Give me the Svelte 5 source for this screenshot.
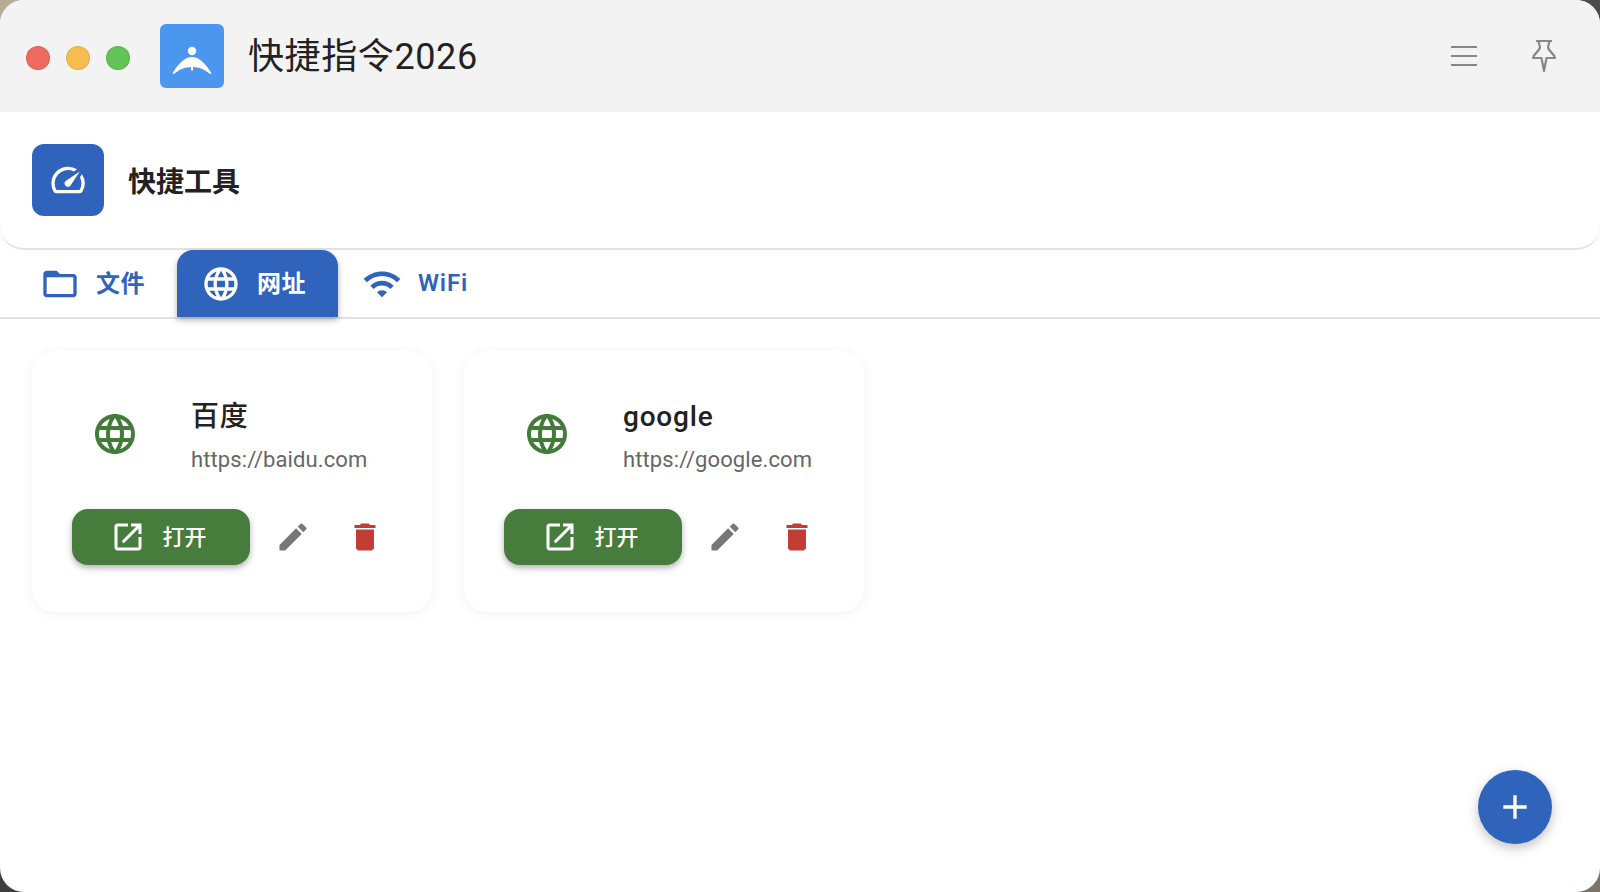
<script>
  const icons = {
    language:
      'M11.99 2C6.47 2 2 6.48 2 12s4.47 10 9.99 10C17.52 22 22 17.52 22 12S17.52 2 11.99 2zm6.93 6h-2.95c-.32-1.25-.78-2.45-1.38-3.56 1.84.63 3.37 1.91 4.33 3.56zM12 4.04c.83 1.2 1.48 2.53 1.91 3.96h-3.82c.43-1.43 1.08-2.76 1.91-3.96zM4.26 14C4.1 13.36 4 12.69 4 12s.1-1.36.26-2h3.38c-.08.66-.14 1.32-.14 2 0 .68.06 1.34.14 2H4.26zm.82 2h2.95c.32 1.25.78 2.45 1.38 3.56-1.84-.63-3.37-1.9-4.33-3.56zm2.95-8H5.08c.96-1.66 2.49-2.93 4.33-3.56C8.81 5.55 8.35 6.75 8.03 8zM12 19.96c-.83-1.2-1.48-2.53-1.91-3.96h3.82c-.43 1.43-1.08 2.76-1.91 3.96zM14.34 14H9.66c-.09-.66-.16-1.32-.16-2 0-.68.07-1.35.16-2h4.68c.09.65.16 1.32.16 2 0 .68-.07 1.34-.16 2zm.25 5.56c.6-1.11 1.06-2.31 1.38-3.56h2.95c-.96 1.65-2.49 2.93-4.33 3.56zM16.36 14c.08-.66.14-1.32.14-2 0-.68-.06-1.34-.14-2h3.38c.16.64.26 1.31.26 2s-.1 1.36-.26 2h-3.38z',
    folder:
      'M20 6h-8l-2-2H4c-1.1 0-1.99.9-1.99 2L2 18c0 1.1.9 2 2 2h16c1.1 0 2-.9 2-2V8c0-1.1-.9-2-2-2zm0 12H4V8h16v10z',
    wifi: 'M1 9l2 2c4.97-4.97 13.03-4.97 18 0l2-2C16.93 2.93 7.08 2.93 1 9zm8 8l3 3 3-3c-1.65-1.66-4.34-1.66-6 0zm-4-4l2 2c2.76-2.76 7.24-2.76 10 0l2-2C15.14 9.14 8.87 9.14 5 13z',
    open: 'M19 19H5V5h7V3H5c-1.11 0-2 .9-2 2v14c0 1.1.89 2 2 2h14c1.1 0 2-.9 2-2v-7h-2v7zM14 3v2h3.59l-9.83 9.83 1.41 1.41L19 6.41V10h2V3h-7z',
    edit: 'M3 17.25V21h3.75L17.81 9.94l-3.75-3.75L3 17.25zM20.71 7.04c.39-.39.39-1.02 0-1.41l-2.34-2.34c-.39-.39-1.02-.39-1.41 0l-1.83 1.83 3.75 3.75 1.83-1.83z',
    trash: 'M6 19c0 1.1.9 2 2 2h8c1.1 0 2-.9 2-2V7H6v12zM19 4h-3.5l-1-1h-5l-1 1H5v2h14V4z',
    add: 'M19 13h-6v6h-2v-6H5v-2h6V5h2v6h6v2z',
    speed:
      'M20.38 8.57l-1.23 1.85a8 8 0 0 1-.22 7.58H5.07A8 8 0 0 1 15.58 6.85l1.85-1.23A10 10 0 0 0 3.35 19a2 2 0 0 0 1.72 1h13.85a2 2 0 0 0 1.74-1 10 10 0 0 0-.27-10.44zM10.59 15.41a2 2 0 0 0 2.83 0l5.66-8.49-8.49 5.66a2 2 0 0 0 0 2.83z'
  };

  const tabs = [
    { label: '文件', icon: 'folder' },
    { label: '网址', icon: 'language' },
    { label: 'WiFi', icon: 'wifi' }
  ];

  let activeTab = $state('网址');

  const links = [
    { name: '百度', url: 'https://baidu.com' },
    { name: 'google', url: 'https://google.com' }
  ];
</script>

{#snippet icon(name, size)}
  <svg width={size} height={size} viewBox="0 0 24 24" fill="currentColor"><path d={icons[name]} /></svg>
{/snippet}

<div class="window">
  <header class="titlebar">
    <div class="lights">
      <span class="light red"></span>
      <span class="light yellow"></span>
      <span class="light green"></span>
    </div>
    <div class="logo">
      <svg width="64" height="64" viewBox="0 0 64 64" fill="#fff">
        <circle cx="32" cy="27" r="4.2" />
        <path d="M13 48.5 C19 39 25 33 32 33 C39 33 45 39 51 48.5 C52 50 50.5 50.5 49.5 49.5 C44 45 39 43.5 33 43 L33 46.5 L31 46.5 L31 43 C25 43.5 20 45 14.5 49.5 C13.5 50.5 12 50 13 48.5 Z" />
      </svg>
    </div>
    <h1>快捷指令2026</h1>
    <div class="window-actions">
      <svg width="36" height="36" viewBox="0 0 36 36" stroke="#888" stroke-width="2" fill="none">
        <path d="M5 9h26M5 18h26M5 27h26" />
      </svg>
      <svg width="36" height="36" viewBox="0 0 36 36" stroke="#888" stroke-width="2.2" fill="none" stroke-linejoin="round">
        <path d="M10 3h16M12.5 3.5 L14 9 C14 13 8 15 7 20 L15.5 20 L18 33 L20.5 20 L29 20 C28 15 22 13 22 9 L23.5 3.5" />
      </svg>
    </div>
  </header>

  <section class="section-head">
    <div class="section-icon">{@render icon('speed', 40)}</div>
    <h2>快捷工具</h2>
  </section>

  <nav class="tabs">
    {#each tabs as tab (tab.label)}
      <button class="tab" class:active={activeTab === tab.label} onclick={() => (activeTab = tab.label)}>
        {@render icon(tab.icon, 40)}
        <span>{tab.label}</span>
      </button>
    {/each}
  </nav>

  <main class="cards">
    {#each links as link (link.name)}
      <article class="card">
        <div class="card-top">
          <div class="globe">{@render icon('language', 48)}</div>
          <div class="card-text">
            <div class="name">{link.name}</div>
            <div class="url">{link.url}</div>
          </div>
        </div>
        <div class="card-actions">
          <button class="open">{@render icon('open', 36)}<span>打开</span></button>
          <button class="icon-btn edit">{@render icon('edit', 36)}</button>
          <button class="icon-btn del">{@render icon('trash', 36)}</button>
        </div>
      </article>
    {/each}
  </main>

  <button class="fab">{@render icon('add', 40)}</button>
</div>

<style>
  :global(body) {
    background: conic-gradient(#4c4c4c 25%, #7c7466 25% 50%, #3f3f3f 50% 75%, #b5ad98 75%);
  }

  .window {
    position: relative;
    height: 892px;
    display: flex;
    flex-direction: column;
    background: #fff;
    border-radius: 24px;
    overflow: hidden;
    font-family: Roboto, 'Noto Sans CJK SC', sans-serif;
    color: #222;
  }

  button {
    border: none;
    background: none;
    padding: 0;
    font: inherit;
    color: inherit;
    cursor: pointer;
  }

  svg {
    display: block;
    flex: none;
  }

  .titlebar {
    flex: none;
    height: 112px;
    display: flex;
    align-items: center;
    padding-left: 26px;
    background: #f3f3f3;
  }
  .lights {
    display: flex;
    gap: 16px;
    margin-top: 4px;
  }
  .light {
    width: 24px;
    height: 24px;
    border-radius: 50%;
    box-sizing: border-box;
    border: 1px solid rgba(0, 0, 0, 0.08);
  }
  .red { background: #ee6a5f; }
  .yellow { background: #f5bd4f; }
  .green { background: #61c454; }

  .logo {
    width: 64px;
    height: 64px;
    margin-left: 30px;
    border-radius: 6px;
    background: #4b96ee;
  }
  h1 {
    margin: 2px 0 0 24px;
    font-size: 36px;
    font-weight: 400;
    line-height: 44px;
    letter-spacing: 0.6px;
  }
  .window-actions {
    display: flex;
    gap: 44px;
    margin-left: auto;
    margin-right: 38px;
  }

  .section-head {
    flex: none;
    height: 135px;
    padding: 0 0 1px 32px;
    display: flex;
    align-items: center;
    gap: 24px;
    border-radius: 0 0 24px 24px;
    border-bottom: 2px solid #e2e2e2;
  }
  .section-icon {
    width: 72px;
    height: 72px;
    display: flex;
    align-items: center;
    justify-content: center;
    border-radius: 12px;
    background: #3064bc;
    color: #fff;
  }
  h2 {
    margin: 0;
    font-size: 28px;
    font-weight: 700;
  }

  .tabs {
    flex: none;
    display: flex;
    padding-left: 16px;
    border-bottom: 2px solid #e2e2e2;
  }
  .tab {
    height: 67px;
    display: flex;
    align-items: center;
    gap: 16px;
    padding: 0 32px 0 24px;
    font-size: 24px;
    font-weight: 600;
    letter-spacing: 0.5px;
    color: #3064bc;
    border-radius: 16px 16px 0 0;
  }
  .tab span {
    margin-bottom: 5px;
  }
  .tab:last-child span {
    margin-bottom: 1px;
    letter-spacing: 0.8px;
  }
  .tab.active {
    background: #3064bc;
    color: #fff;
    box-shadow: 0 3px 6px rgba(0, 0, 0, 0.3);
  }

  .cards {
    display: flex;
    gap: 32px;
    padding: 32px;
  }
  .card {
    width: 400px;
    height: 261px;
    box-sizing: border-box;
    padding: 40px 31px 40px 40px;
    border-radius: 24px;
    box-shadow: 0 2px 12px rgba(0, 0, 0, 0.06);
  }
  .card-top {
    display: flex;
    align-items: center;
    gap: 52px;
    padding-left: 19px;
    height: 92px;
  }
  .globe {
    margin-bottom: 6px;
    color: #437c3a;
  }
  .name {
    font-size: 28px;
    font-weight: 500;
    line-height: 36px;
    letter-spacing: 0.8px;
  }
  .url {
    margin-top: 10px;
    font-size: 22px;
    line-height: 30px;
    letter-spacing: 0.1px;
    color: #666;
  }
  .card-actions {
    display: flex;
    align-items: center;
    margin-top: 26px;
  }
  .open {
    flex: none;
    width: 178px;
    height: 56px;
    display: flex;
    align-items: center;
    justify-content: center;
    gap: 16px;
    padding-right: 5px;
    border-radius: 16px;
    background: #467c3c;
    color: #fff;
    font-size: 22px;
    font-weight: 500;
    box-shadow: 0 3px 6px rgba(0, 0, 0, 0.3);
  }
  .open span {
    margin-bottom: 4px;
  }
  .icon-btn {
    flex: none;
    width: 72px;
    display: flex;
    justify-content: center;
  }
  .edit {
    margin-left: 7px;
    color: #777;
  }
  .del {
    color: #c23d34;
  }

  .fab {
    position: absolute;
    right: 48px;
    bottom: 48px;
    width: 74px;
    height: 74px;
    display: flex;
    align-items: center;
    justify-content: center;
    border-radius: 50%;
    background: #3064bc;
    color: #fff;
    box-shadow: 0 4px 12px rgba(0, 0, 0, 0.25);
  }
</style>
